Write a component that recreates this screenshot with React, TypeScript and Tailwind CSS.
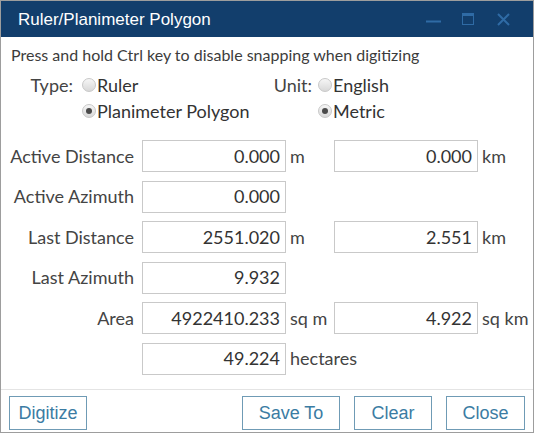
import React from "react";

const seg = { fontFamily: "Lato, 'Open Sans', sans-serif" };
const arial = { fontFamily: "'Liberation Sans', Arial, sans-serif" };

function Radio({ checked, label }: { checked?: boolean; label: string }) {
  return (
    <div className="flex items-center h-[26px]">
      <span className="w-[14px] h-[14px] rounded-full border border-[#c8c8c8] bg-gradient-to-b from-[#f6f6f6] to-[#d8d8d8] flex items-center justify-center mr-[1px]">
        {checked && <span className="w-[6px] h-[6px] rounded-full bg-[#4a4a4a]" />}
      </span>
      <span className="text-[18px] text-[#333]">{label}</span>
    </div>
  );
}

function Box({ value }: { value: string }) {
  return (
    <div className="w-[144px] h-[32px] border border-[#c9c9c9] bg-white flex items-center justify-end pr-[5px] text-[18px] text-[#333]">
      {value}
    </div>
  );
}

type Row = { label: string; v1: string; u1?: string; v2?: string; u2?: string };

const rows: Row[] = [
  { label: "Active Distance", v1: "0.000", u1: "m", v2: "0.000", u2: "km" },
  { label: "Active Azimuth", v1: "0.000" },
  { label: "Last Distance", v1: "2551.020", u1: "m", v2: "2.551", u2: "km" },
  { label: "Last Azimuth", v1: "9.932" },
  { label: "Area", v1: "4922410.233", u1: "sq m", v2: "4.922", u2: "sq km" },
  { label: "", v1: "49.224", u1: "hectares" },
];

function Button({ children, w }: { children: React.ReactNode; w: string }) {
  return (
    <button
      className={`${w} h-[34px] border border-[#6f9bb5] bg-white text-[18px] text-[#3b7ca3] flex items-center justify-center`}
      style={arial}
    >
      {children}
    </button>
  );
}

export default function App() {
  return (
    <div className="w-[534px] h-[433px] border border-[#9d9d9d] bg-white flex flex-col overflow-hidden" style={seg}>
      {/* title bar */}
      <div className="h-[36px] bg-[#123e6c] flex items-center pl-[17px] pr-[23px] shrink-0">
        <span className="text-white text-[17px] flex-1 pt-[1px]" style={arial}>
          Ruler/Planimeter Polygon
        </span>
        <svg width="15" height="12" viewBox="0 0 15 12" className="mr-[21px]">
          <rect x="0" y="7.5" width="15" height="2" fill="#2f6ba5" />
        </svg>
        <svg width="12" height="12" viewBox="0 0 12 12" className="mr-[23px]">
          <rect x="0.5" y="0.5" width="11" height="11" fill="none" stroke="#2f6ba5" strokeWidth="1" />
          <rect x="0.5" y="0.5" width="11" height="2.5" fill="#2f6ba5" />
        </svg>
        <svg width="13" height="13" viewBox="0 0 13 13">
          <path d="M1 1 L12 12 M12 1 L1 12" stroke="#2f6ba5" strokeWidth="2" />
        </svg>
      </div>

      {/* body */}
      <div className="flex-1 flex flex-col">
        <div className="pl-[10px] pt-[4px] h-[28px] text-[16px] text-[#3c3c3c] leading-[28px]">
          Press and hold Ctrl key to disable snapping when digitizing
        </div>

        <div className="flex mt-[7px] text-[18px] text-[#444]">
          <div className="w-[72px] text-right h-[26px] leading-[26px]">Type:</div>
          <div className="ml-[9px] w-[187px] flex flex-col">
            <Radio label="Ruler" />
            <Radio label="Planimeter Polygon" checked />
          </div>
          <div className="w-[43px] text-right h-[26px] leading-[26px]">Unit:</div>
          <div className="ml-[6px] flex flex-col">
            <Radio label="English" />
            <Radio label="Metric" checked />
          </div>
        </div>

        <div className="flex flex-col gap-[8.5px] mt-[16px]">
          {rows.map((r, i) => (
            <div key={i} className="flex items-center text-[18px] text-[#444]">
              <div className="w-[133px] text-right">{r.label}</div>
              <div className="ml-[8px]">
                <Box value={r.v1} />
              </div>
              <div className="w-[48px] pl-[4px] whitespace-nowrap">{r.u1}</div>
              {r.v2 && <Box value={r.v2} />}
              {r.u2 && <div className="pl-[4px] whitespace-nowrap">{r.u2}</div>}
            </div>
          ))}
        </div>
      </div>

      {/* footer */}
      <div className="border-t border-[#e4e4e4] h-[43px] flex items-start pt-[6px] px-[8px] shrink-0">
        <Button w="w-[78px]">Digitize</Button>
        <div className="flex-1" />
        <Button w="w-[98px]">Save To</Button>
        <div className="w-[14px]" />
        <Button w="w-[78px]">Clear</Button>
        <div className="w-[14px]" />
        <Button w="w-[79px]">Close</Button>
      </div>
    </div>
  );
}
